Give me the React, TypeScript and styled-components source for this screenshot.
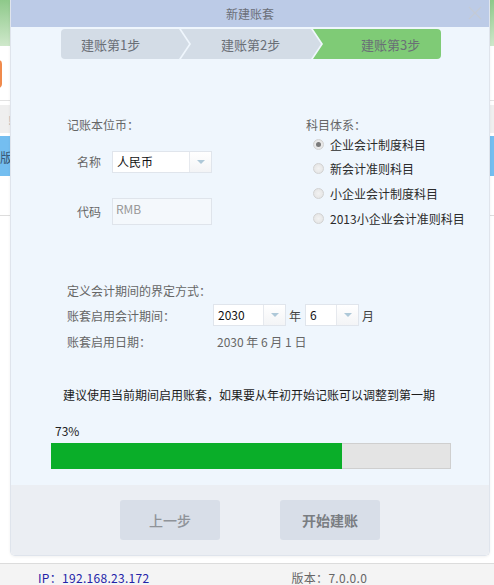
import React from "react";
import styled, { createGlobalStyle } from "styled-components";

const GlobalStyle = createGlobalStyle`
  html, body {
    margin: 0;
    padding: 0;
    background: #ffffff;
  }
  body {
    font-family: "Noto Sans CJK SC", "Noto Sans", "Liberation Sans", sans-serif;
    font-size: 12px;
    color: #666;
  }
`;

const Page = styled.div`
  position: relative;
  width: 494px;
  height: 585px;
  overflow: hidden;
  display: flex;
  flex-direction: column;
  background: #fff;
`;

const TopBand = styled.div`
  height: 46px;
  background: linear-gradient(#8ec98a, #cfe8cb);
`;

const ToolRow = styled.div`
  height: 52px;
  display: flex;
  align-items: center;
  padding-top: 2px;
  border-bottom: 1px solid #e2e2e2;
`;

const OrangeButton = styled.div`
  width: 40px;
  height: 28px;
  margin-left: -38px;
  border-radius: 4px;
  background: #f08a4c;
`;

const TabRow = styled.div`
  height: 28px;
  margin-top: 4px;
  background: #efefef;
  display: flex;
  align-items: center;
  padding-left: 8px;
  color: #bbb;
`;

const BlueRow = styled.div`
  height: 40px;
  margin-top: 3px;
  background: #74bef0;
  display: flex;
  align-items: center;
  color: #3a5a7a;
  font-size: 13px;
`;

const ListRow = styled.div`
  height: 39px;
  border-bottom: 1px solid #dddddd;
`;

const Filler = styled.div`
  flex: 1;
`;

const StatusBar = styled.div`
  height: 14px;
  border-top: 1px solid #dcdcdc;
  background: #f4f4f4;
  display: flex;
  align-items: flex-start;
  padding-top: 7px;
  font-size: 12px;
  line-height: 14px;
`;

const StatusText = styled.span<{ $left: number; $color: string }>`
  margin-left: ${(p) => p.$left}px;
  color: ${(p) => p.$color};
  white-space: nowrap;
  letter-spacing: 0.3px;
`;

/* ---------- dialog ---------- */

const Dialog = styled.div`
  position: absolute;
  left: 10px;
  top: 0;
  width: 480px;
  height: 556px;
  box-sizing: border-box;
  display: flex;
  flex-direction: column;
  border: 1px solid #dfe4ec;
  border-top: none;
  border-radius: 0 0 5px 5px;
  overflow: hidden;
  box-shadow: 0 1px 3px rgba(0, 0, 0, 0.06);
`;

const TitleBar = styled.div`
  position: relative;
  height: 27px;
  flex-shrink: 0;
  background: #bccbe7;
  display: flex;
  align-items: center;
  justify-content: center;
  color: #6b6f78;
  font-size: 12px;
`;

const CloseBtn = styled.div`
  position: absolute;
  right: 7px;
  top: 6px;
  width: 14px;
  height: 14px;
  display: flex;
`;

const Body = styled.div`
  flex: 1;
  background: #eff6fd;
  display: flex;
  flex-direction: column;
  padding-top: 2px;
`;

const Steps = styled.div`
  display: flex;
  margin-left: 50px;
  height: 30px;
`;

const Step = styled.div<{ $pos: "first" | "mid" | "last"; $active?: boolean; $w: number; $pad: number }>`
  width: ${(p) => p.$w}px;
  height: 30px;
  margin-left: ${(p) => (p.$pos === "first" ? 0 : -8)}px;
  padding-left: ${(p) => p.$pad}px;
  box-sizing: border-box;
  display: flex;
  align-items: center;
  font-size: 13px;
  color: #6a6f76;
  background: ${(p) => (p.$active ? "#7fcb76" : "#d3dce6")};
  border-radius: ${(p) =>
    p.$pos === "first" ? "4px 0 0 4px" : p.$pos === "last" ? "0 4px 4px 0" : "0"};
  clip-path: ${(p) =>
    p.$pos === "first"
      ? "polygon(0 0, calc(100% - 10px) 0, 100% 50%, calc(100% - 10px) 100%, 0 100%)"
      : p.$pos === "last"
      ? "polygon(0 0, 100% 0, 100% 100%, 0 100%, 10px 50%)"
      : "polygon(0 0, calc(100% - 10px) 0, 100% 50%, calc(100% - 10px) 100%, 0 100%, 10px 50%)"};
`;

const Columns = styled.div`
  display: flex;
  margin-top: 57px;
  height: 109px;
`;

const LeftCol = styled.div`
  width: 239px;
  padding-left: 56px;
  display: flex;
  flex-direction: column;
`;

const RightCol = styled.div`
  display: flex;
  flex-direction: column;
`;

const SectionLabel = styled.div`
  height: 18px;
  line-height: 18px;
  color: #666;
  font-size: 12px;
  white-space: nowrap;
`;

const FieldRow = styled.div<{ $top: number; $h: number }>`
  display: flex;
  align-items: flex-start;
  margin-top: ${(p) => p.$top}px;
  height: ${(p) => p.$h}px;
`;

const FieldLabel = styled.div<{ $h: number }>`
  width: 35px;
  padding-left: 10px;
  line-height: ${(p) => p.$h}px;
  color: #666;
`;

const SelectBox = styled.div<{ $w: number }>`
  width: ${(p) => p.$w}px;
  height: 22px;
  box-sizing: border-box;
  border: 1px solid #e0e5ec;
  background: #fff;
  display: flex;
  align-items: stretch;
`;

const SelectText = styled.div`
  flex: 1;
  padding-left: 4px;
  line-height: 20px;
  font-size: 12px;
  color: #111;
`;

const SelectArrow = styled.div`
  width: 21px;
  border-left: 1px solid #e6e9ee;
  background: linear-gradient(#ffffff, #f3f4f6);
  display: flex;
  align-items: center;
  justify-content: center;
  &::after {
    content: "";
    border-left: 4px solid transparent;
    border-right: 4px solid transparent;
    border-top: 4px solid #aec8d8;
  }
`;

const CodeInput = styled.div`
  width: 100px;
  height: 27px;
  box-sizing: border-box;
  border: 1px solid #dfe4eb;
  background: #f4f8fc;
  padding: 2px 0 0 3px;
  line-height: 16px;
  color: #999;
  font-size: 12px;
`;

const RadioList = styled.div`
  display: flex;
  flex-direction: column;
  margin-top: -2px;
`;

const RadioRow = styled.div`
  height: 24.6px;
  display: flex;
  align-items: center;
  padding-left: 7px;
  gap: 6px;
  color: #2b2b2b;
  font-size: 12px;
  white-space: nowrap;
`;

const RadioDot = styled.span<{ $checked?: boolean }>`
  width: 11px;
  height: 11px;
  box-sizing: border-box;
  border-radius: 50%;
  border: 1px solid #d2d2d2;
  background: radial-gradient(circle, #f2f2f2, #e2e2e2);
  display: flex;
  align-items: center;
  justify-content: center;
  &::after {
    content: "";
    width: 5px;
    height: 5px;
    border-radius: 50%;
    background: ${(p) => (p.$checked ? "#7a7a7a" : "transparent")};
  }
`;

const PeriodBlock = styled.div`
  margin-top: 57px;
  padding-left: 56px;
  display: flex;
  flex-direction: column;
`;

const PeriodRow = styled.div<{ $top: number }>`
  display: flex;
  align-items: center;
  margin-top: ${(p) => p.$top}px;
  height: 22px;
`;

const PeriodLabel = styled.div`
  width: 146px;
  color: #666;
  white-space: nowrap;
`;

const Unit = styled.span`
  margin: 0 4px 0 3px;
  color: #444;
`;

const DateValue = styled.div`
  padding-left: 4px;
  color: #666;
`;

const Notice = styled.div`
  margin-top: 34px;
  padding-left: 52px;
  height: 18px;
  line-height: 18px;
  color: #1c1c1c;
  font-size: 12px;
  white-space: nowrap;
`;

const Percent = styled.div`
  margin-top: 18px;
  padding-left: 44px;
  height: 18px;
  line-height: 18px;
  color: #222;
  font-size: 12px;
`;

const ProgressTrack = styled.div`
  margin: 3px 0 0 40px;
  width: 400px;
  height: 26px;
  box-sizing: border-box;
  border: 1px solid #cfcfcf;
  background: #e4e4e4;
  display: flex;
`;

const ProgressFill = styled.div`
  height: 100%;
  background: #0aae29;
  margin: -1px 0 0 -1px;
  padding-bottom: 2px;
`;

const Footer = styled.div`
  height: 70px;
  flex-shrink: 0;
  background: #ebeef3;
  display: flex;
  justify-content: center;
  align-items: flex-start;
  padding-top: 15px;
  box-sizing: border-box;
  gap: 60px;
`;

const FooterButton = styled.button<{ $primary?: boolean }>`
  width: 100px;
  height: 40px;
  border: none;
  border-radius: 3px;
  background: #d8dee8;
  color: ${(p) => (p.$primary ? "#7a7d82" : "#8f9399")};
  font-family: inherit;
  font-size: 14px;
  font-weight: ${(p) => (p.$primary ? 700 : 500)};
  padding: 0;
`;

const steps = [
  { label: "建账第1步", pos: "first" as const, w: 128, pad: 20 },
  { label: "建账第2步", pos: "mid" as const, w: 140, pad: 40 },
  { label: "建账第3步", pos: "last" as const, w: 128, pad: 48, active: true },
];

const subjects = ["企业会计制度科目", "新会计准则科目", "小企业会计制度科目", "2013小企业会计准则科目"];

const progress = 73;

const App = () => {
  return (
    <>
      <GlobalStyle />
      <Page>
        <TopBand />
        <ToolRow>
          <OrangeButton />
        </ToolRow>
        <TabRow>!</TabRow>
        <BlueRow>版</BlueRow>
        <ListRow />
        <Filler />
        <StatusBar>
          <StatusText $left={38} $color="#2323a8">IP：192.168.23.172</StatusText>
          <StatusText $left={142} $color="#666">版本：7.0.0.0</StatusText>
        </StatusBar>

        <Dialog>
          <TitleBar>
            新建账套
            <CloseBtn>
              <svg width="14" height="14" viewBox="0 0 14 14">
                <path d="M1 1 L13 13 M13 1 L1 13" stroke="#c3cad6" strokeWidth="1.3" fill="none" />
              </svg>
            </CloseBtn>
          </TitleBar>
          <Body>
            <Steps>
              {steps.map((s) => (
                <Step key={s.label} $pos={s.pos} $w={s.w} $pad={s.pad} $active={s.active}>
                  {s.label}
                </Step>
              ))}
            </Steps>

            <Columns>
              <LeftCol>
                <SectionLabel>记账本位币：</SectionLabel>
                <FieldRow $top={17} $h={22}>
                  <FieldLabel $h={22}>名称</FieldLabel>
                  <SelectBox $w={100}>
                    <SelectText>人民币</SelectText>
                    <SelectArrow />
                  </SelectBox>
                </FieldRow>
                <FieldRow $top={25} $h={27}>
                  <FieldLabel $h={27}>代码</FieldLabel>
                  <CodeInput>RMB</CodeInput>
                </FieldRow>
              </LeftCol>
              <RightCol>
                <SectionLabel>科目体系：</SectionLabel>
                <RadioList>
                  {subjects.map((s, i) => (
                    <RadioRow key={s}>
                      <RadioDot $checked={i === 0} />
                      {s}
                    </RadioRow>
                  ))}
                </RadioList>
              </RightCol>
            </Columns>

            <PeriodBlock>
              <SectionLabel>定义会计期间的界定方式：</SectionLabel>
              <PeriodRow $top={4}>
                <PeriodLabel>账套启用会计期间：</PeriodLabel>
                <SelectBox $w={73}>
                  <SelectText>2030</SelectText>
                  <SelectArrow />
                </SelectBox>
                <Unit>年</Unit>
                <SelectBox $w={54}>
                  <SelectText>6</SelectText>
                  <SelectArrow />
                </SelectBox>
                <Unit>月</Unit>
              </PeriodRow>
              <PeriodRow $top={4}>
                <PeriodLabel>账套启用日期：</PeriodLabel>
                <DateValue>2030 年 6 月 1 日</DateValue>
              </PeriodRow>
            </PeriodBlock>

            <Notice>建议使用当前期间启用账套，如果要从年初开始记账可以调整到第一期</Notice>
            <Percent>{progress}%</Percent>
            <ProgressTrack>
              <ProgressFill style={{ width: `${progress}%` }} />
            </ProgressTrack>
          </Body>
          <Footer>
            <FooterButton>上一步</FooterButton>
            <FooterButton $primary>开始建账</FooterButton>
          </Footer>
        </Dialog>
      </Page>
    </>
  );
};

export default App;
